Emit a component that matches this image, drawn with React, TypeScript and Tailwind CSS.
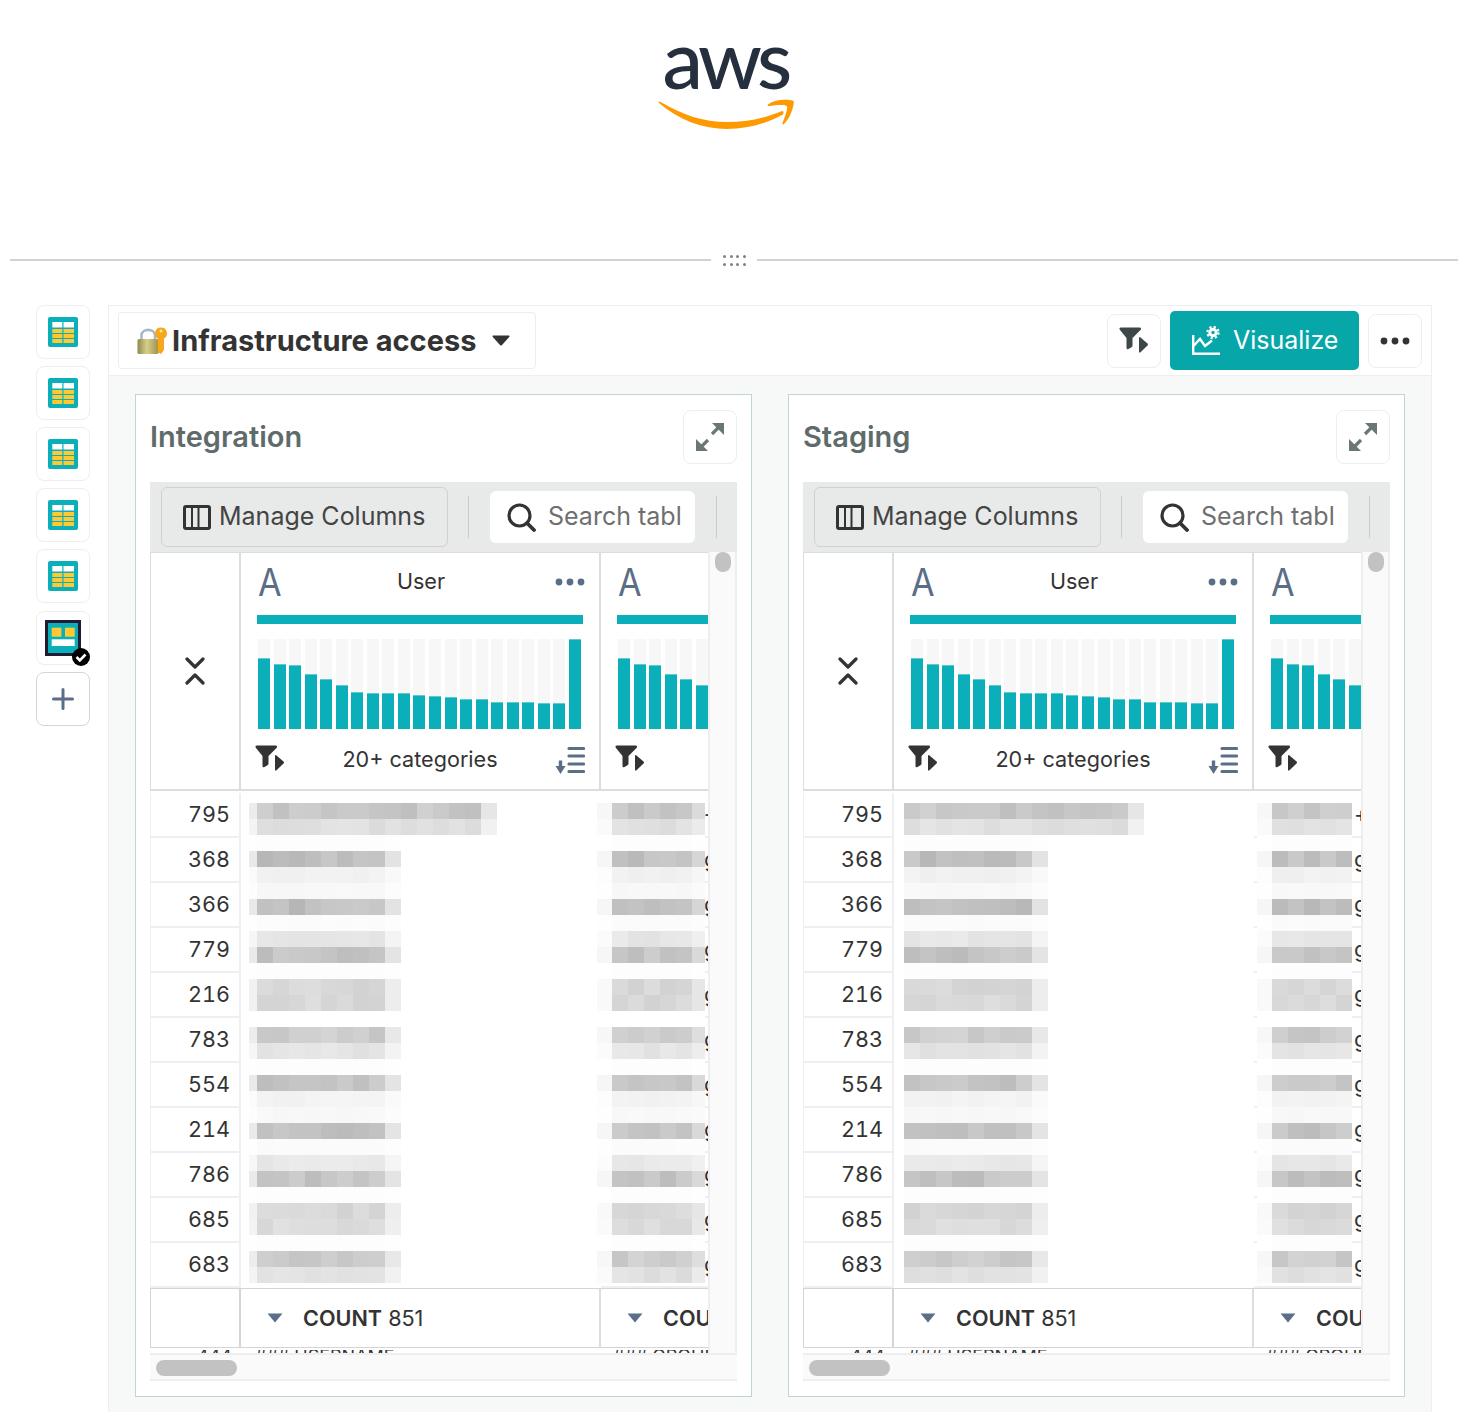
import React from "react";

const TEAL = "#0aafb9";
const SLATE = "#5b6e87";

const BARS = [71, 65, 64, 55, 50, 44, 37, 36, 36, 36, 34, 33, 32, 30, 30, 27, 27, 27, 26, 26, 90];
const NUMS = ["795", "368", "366", "779", "216", "783", "554", "214", "786", "685", "683"];
const LINES = [0xc8, 0xe0, 0xfd, 0xc0, 0xf1, 0xf8, 0xc0, 0xfb, 0xe6, 0xc4, 0xfd, 0xd8, 0xd8, 0xff, 0xcc, 0xe4, 0xfd, 0xc4, 0xf3, 0xf8, 0xc4, 0xfb, 0xe8, 0xc4, 0xfd, 0xd8, 0xdc, 0xfd, 0xcc, 0xe0];

function rnd(i: number, j: number, s: number) {
  const v = Math.sin(i * 12.9898 + j * 78.233 + s * 37.7) * 43758.5453;
  return v - Math.floor(v);
}

function grey(v: number) {
  const c = Math.max(0, Math.min(255, Math.round(v)));
  return `rgb(${c},${c},${c})`;
}

function Mosaic({ left, lead, leadMix, cells, firstCells, tail, seed, tailMix }: { left: number; lead: number; leadMix: number; cells: number; firstCells: number; tail: number; seed: number; tailMix: number }) {
  return (
    <div className="absolute top-[10px] flex flex-col" style={{ left }}>
      {LINES.map((base, i) => {
        const n = i < 2 ? firstCells : cells;
        const amp = (255 - base) * 0.16;
        const list = [];
        if (lead) list.push({ w: lead, c: base + (255 - base) * leadMix });
        for (let j = 0; j < n; j++) list.push({ w: 16, c: base + (rnd(i, j, seed) - 0.5) * 2 * amp });
        if (tail) list.push({ w: tail, c: base + (255 - base) * tailMix });
        return (
          <div key={i} className="flex h-4">
            {list.map((c, j) => (
              <div key={j} className="h-4" style={{ width: c.w, backgroundColor: grey(c.c) }} />
            ))}
          </div>
        );
      })}
    </div>
  );
}

function FilterIcon({ color = "#333333" }: { color?: string }) {
  return (
    <svg width="30" height="27" viewBox="0 0 30 27" fill={color}>
      <path d="M2 0.5 H20.5 Q23 0.5 21.5 3 L13.5 11 V18.5 Q13.5 19.5 12.5 20.2 L9.5 22 Q7.5 23 7.5 20.8 V11 L1 3 Q-0.5 0.5 2 0.5Z" />
      <path d="M20 11 Q20 9.5 21.5 10.5 L28.5 16.5 Q29.5 17.5 28.5 18.5 L21.5 25.3 Q20 26.3 20 24.5Z" />
    </svg>
  );
}

function SortIcon() {
  return (
    <svg width="30" height="29" viewBox="0 0 30 29" fill="none" stroke={SLATE}>
      <path d="M14 2.5 H28.5 M14 10 H28.5 M14 18 H28.5 M14 25.5 H28.5" strokeWidth="3.2" strokeLinecap="round" />
      <path d="M5.5 14.5 V24" strokeWidth="3.4" />
      <path d="M0.5 20 H10.5 L5.5 28Z" fill={SLATE} stroke="none" />
    </svg>
  );
}

function ExpandIcon() {
  return (
    <svg width="30" height="30" viewBox="0 0 30 30" fill="#6b7677" stroke="none">
      <path d="M17 12 L25 4" stroke="#6b7677" strokeWidth="3.2" fill="none" />
      <path d="M17 1 H29 V13 L25 9 L21 5Z" />
      <path d="M13 18 L5 26" stroke="#6b7677" strokeWidth="3.2" fill="none" />
      <path d="M1 17 V29 H13 L9 25 L5 21Z" />
    </svg>
  );
}

function TableIcon() {
  return (
    <svg width="30" height="30" viewBox="0 0 30 30">
      <rect width="30" height="30" rx="2" fill={TEAL} />
      <rect x="4.3" y="5" width="10" height="5.5" fill="#fff" />
      <rect x="15.5" y="5" width="10.5" height="5.5" fill="#fff" />
      {[12, 17, 22].map((y) => (
        <g key={y} fill="#ffc933">
          <rect x="4.3" y={y} width="10" height="4" />
          <rect x="15.5" y={y} width="10.5" height="4" />
        </g>
      ))}
    </svg>
  );
}

function LockEmoji() {
  return (
    <svg width="30" height="28" viewBox="0 0 30 28">
      <defs>
        <linearGradient id="lockg" x1="0" x2="1" y1="0" y2="0">
          <stop offset="0" stopColor="#8f8a4c" />
          <stop offset="0.45" stopColor="#d9cf8b" />
          <stop offset="1" stopColor="#9b9150" />
        </linearGradient>
      </defs>
      <path d="M4.5 13 V8.5 C4.5 1 18 1 18 8.5 V13" fill="none" stroke="#a9b7c9" strokeWidth="2.6" />
      <rect x="0.5" y="12" width="21" height="15" rx="1.5" fill="url(#lockg)" />
      <path d="M24 0.5 A6 6 0 0 1 27 11.7 V23 L24 27 L21 25.5 V11.7 A6 6 0 0 1 24 0.5Z" fill="#f5a81c" />
      <circle cx="24" cy="4" r="1.5" fill="#fde7b0" />
      <path d="M21 15 H19.5 V17 H21 M21 19 H19.5 V21 H21" fill="#d88f10" />
    </svg>
  );
}

function Dots({ color }: { color: string }) {
  return (
    <svg width="30" height="8" viewBox="0 0 30 8" fill={color}>
      <circle cx="4" cy="4" r="3.4" />
      <circle cx="15" cy="4" r="3.4" />
      <circle cx="26" cy="4" r="3.4" />
    </svg>
  );
}

function SquareButton({ children, className = "border-[#eeeeee]" }: { children?: React.ReactNode; className?: string }) {
  return <div className={`relative flex h-[54px] w-[54px] shrink-0 items-center justify-center rounded-lg border bg-white ${className}`}>{children}</div>;
}

function ColumnHeader({ clipped }: { clipped?: boolean }) {
  return (
    <div className={`flex h-full flex-col pl-4 ${clipped ? "w-[359px]" : "pr-4"}`}>
      <div className="relative flex h-[58px] items-center justify-center pb-[2px]">
        <span className="absolute left-[1px] top-[6px] origin-left scale-x-[0.9] text-[38px] font-normal leading-[46px] text-[#5b6e87]">A</span>
        <span className="pl-[2px] text-[21.6px] text-[#333333]">User</span>
        <span className="absolute right-[-2px] top-[25px] flex"><Dots color={SLATE} /></span>
      </div>
      <div className="mt-[4px] h-[9px] w-[326px] bg-[#0aafb9]" />
      <div className="ml-[1px] mt-[15px] flex h-[90px] w-[323px] justify-between">
        {BARS.map((h, i) => (
          <div key={i} className="flex h-[90px] w-3 flex-col justify-end bg-[#f7f7f7]">
            <div className="border-t border-[#5fc9d0] bg-[#0aafb9]" style={{ height: h }} />
          </div>
        ))}
      </div>
      <div className="relative mt-[15px] flex h-[30px] items-center justify-center">
        <span className="absolute left-[-2px] top-[1px] flex"><FilterIcon /></span>
        <span className="text-[21.6px] text-[#333333]">20+ categories</span>
        <span className="absolute right-[-2px] top-[2px] flex"><SortIcon /></span>
      </div>
    </div>
  );
}

function Panel({ title, first, m1, m3, thirdPad }: { title: string; first: string; m1: { left: number; lead: number; seed: number }; m3: { left: number; cells: number; tail: number; seed: number }; thirdPad: string }) {
  return (
    <div className="flex h-[1003px] w-[617px] shrink-0 flex-col border border-[#bdd7d5] bg-white px-[14px] pb-[15px] pt-[15px]">
      <div className="flex h-[54px] items-center justify-between">
        <span className="text-[29px] font-semibold text-[#5f6b6b]">{title}</span>
        <SquareButton><ExpandIcon /></SquareButton>
      </div>

      <div className="mt-[18px] flex h-[70px] items-center bg-[#e8eaea] pl-[11px]">
        <div className="flex h-[60px] w-[287px] items-center gap-2 rounded-md border border-[#cfd2d2] pl-[21px]">
          <svg width="28" height="25" viewBox="0 0 28 25" fill="none" stroke="#333333">
            <rect x="1.5" y="1.5" width="25" height="22" rx="1.5" strokeWidth="3" />
            <path d="M9 2 V23 M15.5 2 V23" strokeWidth="2" />
          </svg>
          <span className="text-[25px] text-[#444444]">Manage Columns</span>
        </div>
        <div className="ml-5 h-[42px] w-px bg-[#c9cccc]" />
        <div className="ml-[21px] flex h-[52px] w-[205px] items-center gap-[12px] rounded-md bg-white pl-[17px]">
          <svg width="29" height="29" viewBox="0 0 29 29" fill="none" stroke="#333333" strokeWidth="3.2">
            <circle cx="12.5" cy="12.5" r="10.5" />
            <path d="M20 20 L27 27" strokeLinecap="round" strokeWidth="3.8" />
          </svg>
          <span className="overflow-hidden whitespace-nowrap text-[25px] text-[#6f6f6f]">Search tabl</span>
        </div>
        <div className="ml-[21px] h-[42px] w-px bg-[#c9cccc]" />
      </div>

      <div className="flex flex-1 flex-col">
        <div className="flex h-[801px]">
          <div className="flex w-[558px] flex-col overflow-hidden">
            <div className="flex h-[239px] shrink-0 border-b-2 border-t border-[#dddddd]">
              <div className="flex w-[91px] shrink-0 items-center justify-center border-l border-r-2 border-[#dddddd]">
                <svg width="20" height="28" viewBox="0 0 20 28" fill="none" stroke="#333333" strokeWidth="3.2" strokeLinecap="round" strokeLinejoin="round">
                  <path d="M2 2 L10 10 L18 2" />
                  <path d="M2 26 L10 18 L18 26" />
                </svg>
              </div>
              <div className="w-[360px] shrink-0 border-r-2 border-[#dddddd]">
                <ColumnHeader />
              </div>
              <div className="flex-1 overflow-hidden">
                <ColumnHeader clipped />
              </div>
            </div>

            <div className="relative mt-[2px] h-[495px] shrink-0 overflow-hidden">
              {NUMS.map((n, i) => (
                <div key={n} className="flex h-[45px]">
                  <div className="flex w-[91px] shrink-0 items-center justify-end border-b-2 border-l border-r-2 border-[#eeeef3] pr-[9px] text-[21.6px] tabular-nums text-[#333333]">{n}</div>
                  <div className="w-[360px] shrink-0" />
                  <div className={`flex flex-1 items-center overflow-hidden whitespace-nowrap border-b-2 border-[#eeeef3] text-[22px] text-[#333333] ${thirdPad}`}>{i === 0 ? first : "group"}</div>
                </div>
              ))}
              <Mosaic left={m1.left} lead={m1.lead} leadMix={0.65} cells={8} firstCells={14} tail={16} seed={m1.seed} tailMix={0.55} />
              <Mosaic left={m3.left} lead={15} leadMix={0.85} cells={m3.cells} firstCells={m3.cells} tail={m3.tail} seed={m3.seed} tailMix={0.35} />
            </div>

            <div className="flex h-[60px] shrink-0 border-b border-t border-[#d5d5d8]">
              <div className="w-[91px] shrink-0 border-l border-r-2 border-[#d5d5d8]" />
              <div className="flex w-[360px] shrink-0 items-center border-r-2 border-[#dddddd] pl-[26px]">
                <svg width="16" height="10" viewBox="0 0 16 10" fill={SLATE}><path d="M0.5 0.5 H15.5 L8 9.5Z" /></svg>
                <span className="ml-[20px] text-[21.6px] text-[#333333]"><b className="font-semibold">COUNT</b> 851</span>
              </div>
              <div className="flex flex-1 items-center overflow-hidden whitespace-nowrap pl-[26px]">
                <svg className="shrink-0" width="16" height="10" viewBox="0 0 16 10" fill={SLATE}><path d="M0.5 0.5 H15.5 L8 9.5Z" /></svg>
                <span className="ml-[20px] text-[21.6px] font-semibold text-[#333333]">COUNT 851</span>
              </div>
            </div>

            <div className="mt-[2px] flex h-[3px] shrink-0 items-start overflow-hidden whitespace-nowrap text-[18px] leading-[14px] text-[#333333]">
              <div className="w-[91px] shrink-0 pr-[9px] text-right">444</div>
              <div className="w-[360px] shrink-0 pl-[14px]">### USERNAME</div>
              <div className="flex-1 pl-[12px]">### GROUP</div>
            </div>
          </div>
          <div className="flex flex-1 flex-col items-center border-x-2 border-[#eeeeee] bg-[#fafafa] pl-[1px]">
            <div className="h-5 w-4 rounded-full bg-[#c2c2c2]" />
          </div>
        </div>
        <div className="flex h-[28px] items-center border-y-2 border-[#eeeeee] bg-[#fafafa] pl-[6px] pt-[2px]">
          <div className="h-4 w-[81px] rounded-full bg-[#c2c2c2]" />
        </div>
      </div>
    </div>
  );
}

export default function App() {
  return (
    <div className="h-[1412px] w-[1482px] overflow-hidden bg-white [font-family:Inter,sans-serif]">
      <div className="relative h-[248px]">
        <div className="flex flex-col items-center pt-[18px]">
          <span className="ml-[-32px] text-[81px] font-medium leading-[80px] tracking-[-4.6px] text-[#252f3e] [font-family:Lato,sans-serif]">aws</span>
        </div>
        <svg className="absolute left-[657px] top-[96px]" width="140" height="38" viewBox="0 0 140 38" fill="#ff9900">
          <path d="M2 7 C22 24 46 33 70 33 C90 33 108 28 125 19 C127 18 127 15 125 15 C106 23 88 26 70 26 C46 26 26 19 3.5 6 C2 5 1 6 2 7Z" />
          <path d="M111 8.5 C118 3 130 3 135.5 4.5 C137 5 137 6 136.5 9 C135 16 132 23 127 28 C126 29 125 28 125.5 27 C127.5 22 131 13 130 10.5 C129 8 118 9 112.5 10 C111 10.5 110 9.5 111 8.5Z" />
        </svg>
      </div>

      <div className="flex h-[24px] items-center pl-[10px] pr-[24px]">
        <div className="h-[2px] w-[701px] bg-[#d2d2d2]" />
        <div className="mx-[12px] grid w-[22px] grid-cols-4 gap-x-[4px] gap-y-[5px]">
          {Array.from({ length: 8 }).map((_, i) => (
            <div key={i} className="h-[3px] w-[3px] rounded-full bg-[#808080]" />
          ))}
        </div>
        <div className="h-[2px] flex-1 bg-[#d2d2d2]" />
      </div>

      <div className="mt-[33px] flex pl-[36px]">
        <div className="flex w-[54px] shrink-0 flex-col">
          <div className="flex flex-col gap-[7px]">
            {[0, 1, 2, 3, 4].map((i) => (
              <SquareButton key={i}><TableIcon /></SquareButton>
            ))}
          </div>
          <SquareButton className="mt-2 border-[#eeeeee]">
            <svg width="36" height="36" viewBox="0 0 36 36">
              <rect width="36" height="36" fill="#211c33" />
              <rect x="3" y="3" width="30" height="30" fill={TEAL} />
              <rect x="6.7" y="7.7" width="9.7" height="9" fill="#ffc933" />
              <rect x="20" y="7.7" width="9.7" height="9" fill="#ffc933" />
              <rect x="6.7" y="19.3" width="23" height="6.7" fill="#fff" />
            </svg>
            <svg className="absolute left-[35px] top-[36px]" width="18" height="18" viewBox="0 0 18 18">
              <circle cx="9" cy="9" r="9" fill="#000" />
              <path d="M4.5 9 L7.8 12.3 L13.5 6.5" fill="none" stroke="#fff" strokeWidth="2.6" />
            </svg>
          </SquareButton>
          <SquareButton className="mt-[7px] border-[#d5d5d5]">
            <svg width="22" height="22" viewBox="0 0 22 22" stroke={SLATE} strokeWidth="3" strokeLinecap="round">
              <path d="M11 1.5 V20.5 M1.5 11 H20.5" />
            </svg>
          </SquareButton>
        </div>

        <div className="ml-[18px] flex h-[1107px] w-[1324px] shrink-0 flex-col border-x border-t border-[#eeeeee] bg-[#f7f9f8]">
          <div className="flex h-[70px] shrink-0 items-center border-b border-[#eeeeee] bg-white pl-[9px] pr-[9px]">
            <div className="flex h-[57px] w-[418px] items-center rounded border border-[#eeeeee] pl-[18px]">
              <LockEmoji />
              <span className="ml-[5px] text-[29px] font-bold text-[#333333]">Infrastructure access</span>
              <svg className="ml-[16px]" width="18" height="11" viewBox="0 0 18 11" fill="#333333"><path d="M1 0.5 H17 Q18 0.5 17.2 2 L10 10 Q9 11 8 10 L0.8 2 Q0 0.5 1 0.5Z" /></svg>
            </div>
            <div className="ml-auto flex items-center gap-[9px]">
              <SquareButton><FilterIcon color="#3d4748" /></SquareButton>
              <div className="flex h-[59px] w-[189px] items-center rounded-[5px] bg-[#07a6a9] pl-[22px]">
                <svg width="28" height="30" viewBox="0 0 28 30" fill="none" stroke="#ffffff" strokeWidth="2.4">
                  <path d="M1.2 9 V27.8 H28" />
                  <path d="M1.5 20 L8 13 L13 20 L20 14.5" />
                  <circle cx="21" cy="6.5" r="3.2" strokeWidth="3" />
                  <circle cx="21" cy="6.5" r="5.6" strokeWidth="2.2" strokeDasharray="2.2 2.2" />
                </svg>
                <span className="ml-[13px] text-[25px] text-white">Visualize</span>
              </div>
              <SquareButton><Dots color="#333333" /></SquareButton>
            </div>
          </div>
          <div className="flex gap-[36px] pl-[26px] pt-[18px]">
            <Panel title="Integration" first="-" thirdPad="pl-[103px]" m1={{ left: 99, lead: 8, seed: 1 }} m3={{ left: 447, cells: 5, tail: 13, seed: 2 }} />
            <Panel title="Staging" first="+" thirdPad="pl-[100px]" m1={{ left: 101, lead: 0, seed: 3 }} m3={{ left: 454, cells: 5, tail: 0, seed: 4 }} />
          </div>
        </div>
      </div>
    </div>
  );
}
